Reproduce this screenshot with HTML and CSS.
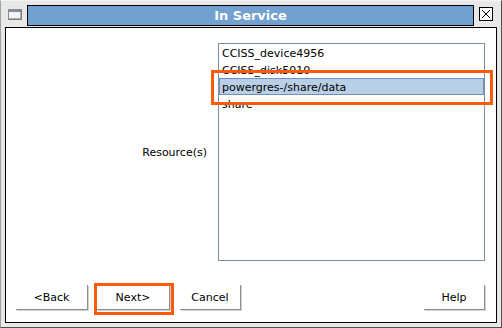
FILE: index.html
```html
<!DOCTYPE html>
<html>
<head>
<meta charset="utf-8">
<link rel="stylesheet" href="styles.css">
</head>
<body>
<div class="window">
  <div class="titlerow">
    <svg class="winicon" width="14" height="11" viewBox="0 0 14 11">
      <rect x="0.5" y="0.5" width="13" height="10" fill="#f4f4f4" stroke="#8c8c8c"/>
      <rect x="1" y="1" width="12" height="2" fill="#7c8ea3"/>
      <line x1="1" y1="10" x2="13" y2="10" stroke="#6e6e6e"/>
      <line x1="13" y1="1" x2="13" y2="10" stroke="#6e6e6e"/>
    </svg>
    <div class="titlebar">In Service</div>
    <svg class="closebox" width="14" height="14" viewBox="0 0 14 14">
      <rect x="0.5" y="0.5" width="13" height="13" fill="#ffffff" stroke="#000"/>
      <path d="M3 3 L11 11 M11 3 L3 11" stroke="#000" stroke-width="1"/>
    </svg>
  </div>
  <div class="content">
    <div class="field">
      <div class="label">Resource(s)</div>
      <div class="listbox">
        <div class="item">CCISS_device4956</div>
        <div class="item">CCISS_disk5010</div>
        <div class="item selected">powergres-/share/data</div>
        <div class="item">share</div>
      </div>
    </div>
    <div class="buttons">
      <button class="btn btn-back">&lt;Back</button>
      <button class="btn btn-next">Next&gt;</button>
      <button class="btn btn-cancel">Cancel</button>
      <div class="spacer"></div>
      <button class="btn btn-help">Help</button>
    </div>
  </div>
  <div class="mark mark-list"></div>
  <div class="mark mark-next"></div>
</div>
</body>
</html>
```
FILE: styles.css
```css
* { box-sizing: border-box; }
html, body { margin: 0; padding: 0; }
body {
  font-family: "DejaVu Sans", sans-serif;
  font-size: 11px;
  color: #000;
  background: #e8e8e8;
}
.window {
  position: relative;
  width: 502px;
  height: 328px;
  background: #e8e8e8;
  border-left: 1px solid #a0a0a0;
  border-top: 1px solid #f4f4f4;
  border-right: 1px solid #505050;
  border-bottom: 1px solid #505050;
  display: flex;
  flex-direction: column;
}
.titlerow {
  height: 26px;
  display: flex;
  align-items: flex-start;
  padding-top: 4px;
}
.winicon {
  margin-left: 7px;
  margin-top: 4px;
  display: block;
}
.titlebar {
  margin-left: 5px;
  width: 447px;
  height: 21px;
  background: #72a0d0;
  border: 1px solid #000;
  color: #fff;
  font-weight: bold;
  font-size: 13px;
  text-align: center;
  line-height: 19px;
}
.closebox {
  margin-left: 5px;
  margin-top: 2px;
  display: block;
}
.content {
  margin-left: 4px;
  width: 492px;
  height: 296px;
  border: 1px solid #000;
  background: #fff;
  display: flex;
  flex-direction: column;
  padding: 15px 11px 11px 10px;
}
.field {
  display: flex;
  align-items: center;
}
.label {
  width: 191px;
  text-align: right;
}
.listbox {
  margin-left: 11px;
  width: 267px;
  height: 218px;
  border: 1px solid #7d8fa2;
  background: #fff;
  display: flex;
  flex-direction: column;
}
.item {
  height: 17px;
  line-height: 17px;
  padding-left: 2px;
  border: 1px solid transparent;
  white-space: nowrap;
}
.selected {
  background: #b8cfe6;
  border-color: #6f8fbf;
}
.buttons {
  display: flex;
  margin-top: auto;
  height: 26px;
}
.spacer { flex: 1; }
.btn {
  font-family: "DejaVu Sans", sans-serif;
  font-size: 11px;
  color: #000;
  background: #fff;
  border: none;
  border-right: 1px solid #8c8c8c;
  border-bottom: 1px solid #8c8c8c;
  box-shadow: 1px 1px 0 #d2d2d2;
  height: 25px;
  padding: 0;
  margin: 0;
}
.btn-back { width: 72px; }
.btn-next { width: 73px; margin-left: 9px; }
.btn-cancel { width: 61px; margin-left: 10px; }
.btn-help { width: 61px; }
.mark {
  position: absolute;
  border: 3px solid #ff5a0a;
}
.mark-list {
  left: 210px;
  top: 69px;
  width: 282px;
  height: 35px;
}
.mark-next {
  left: 93px;
  top: 282px;
  width: 80px;
  height: 32px;
}
```
